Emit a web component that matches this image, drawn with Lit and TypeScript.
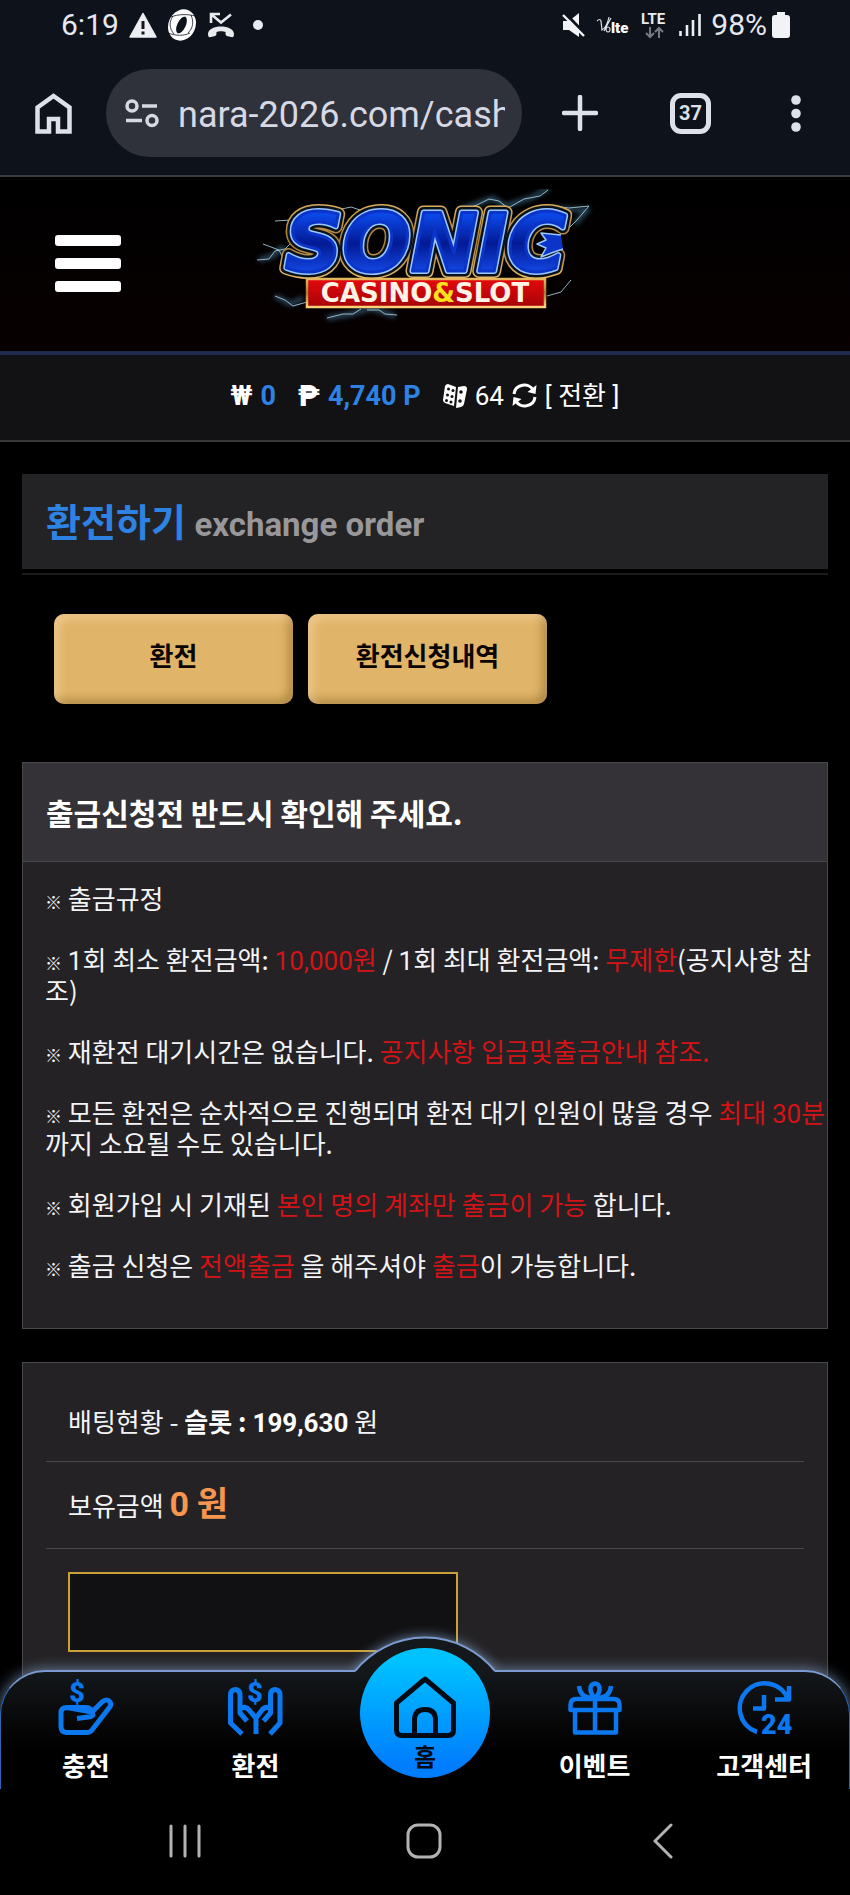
import { LitElement, html, css } from "lit";
import { customElement } from "lit/decorators.js";

@customElement("phone-status")
export class PhoneStatus extends LitElement {
  static styles = css`
    :host {
      display: flex;
      align-items: center;
      justify-content: space-between;
      height: 50px;
      padding: 0 60px 0 61px;
      font: 400 30px/50px Roboto, sans-serif;
      color: #e6e8f0;
    }
    .group { display: flex; align-items: center; }
    .left { gap: 10px; }
    .right { gap: 10px; }
    .dot { width: 10px; height: 10px; margin-left: 8px; border-radius: 50%; background: #e8eaf6; }
    .power { display: flex; align-items: center; gap: 5px; }
    svg { display: block; }
    .net { font: 700 15px Roboto, sans-serif; }
    .volte { font: 900 15px Roboto, sans-serif; }
  `;
  render() {
    return html`
      <div class="group left">
        <span>6:19</span>
        <svg width="28" height="26" viewBox="0 0 28 26">
          <path d="M14 1.500 27 25H1z" fill="#eceef2" stroke="#eceef2" stroke-width="1.500" stroke-linejoin="round"/>
          <path d="M14 9v8M14 19.500v3" stroke="#10151d" stroke-width="3"/>
        </svg>
        <svg width="30" height="32" viewBox="0 0 30 32">
          <ellipse cx="15" cy="16" rx="13.500" ry="16" transform="rotate(25 15 16)" fill="#fff"/>
          <ellipse cx="14.500" cy="16" rx="4.200" ry="9" transform="rotate(25 14.500 16)" fill="#0d121b"/>
          <path d="M4 8c7-3 17-3 24-1M1 24c8 3 16 3 22 0M6 7c-4 6-4 12 1 18M24 6c3 7 2 13-3 18" fill="none" stroke="#10151d" stroke-width=".8"/>
        </svg>
        <svg width="28" height="26" viewBox="0 0 28 26">
          <path d="M4 11V2h9M4.500 2.500 14 10.500 24 2.500" fill="none" stroke="#e8eaee" stroke-width="2.600"/>
          <path d="M1 22c0-10 26-10 26 0 0 3-1 3.500-3 3l-4-1c-1.500-.4-1.500-1.500-1.500-4-2-1-7-1-9 0 0 2.500 0 3.600-1.500 4l-4 1c-2 .5-3 0-3-3z" fill="#e8eaee"/>
        </svg>
        <span class="dot"></span>
      </div>
      <div class="group right">
        <svg width="24" height="24" viewBox="0 0 24 24">
          <path d="M1 8h6L17 0v24L7 17H1z" fill="#f1f3f6"/>
          <path d="M3 0 24 22" stroke="#0d121b" stroke-width="3"/>
          <path d="M1 2 22 23" stroke="#f1f3f6" stroke-width="2.400"/>
        </svg>
        <svg width="35" height="24" viewBox="0 0 35 24">
          <path d="M1 8q3-3 4 0l1 9Q11 14 13 4M8 18 15 5M12 14a2 2.500 0 1 0 .1 0" fill="none" stroke="#dfe1e6" stroke-width="1.200"/>
          <text class="volte" x="15" y="20" fill="#fff">lte</text>
        </svg>
        <svg width="28" height="28" viewBox="0 0 28 28">
          <text class="net" x="0" y="13" fill="#e8eaee">LTE</text>
          <path d="M9 16v10M5 22l4 4 4-4M18 27V17M14 21l4-4 4 4" fill="none" stroke="#777b80" stroke-width="2"/>
        </svg>
        <svg width="22" height="24" viewBox="0 0 22 24">
          <path d="M1.500 18v5M8 12v11M14 7v16M20.500 1v22" stroke="#eceef2" stroke-width="2.600"/>
        </svg>
        <div class="power">
          <span>98%</span>
          <svg width="18" height="26" viewBox="0 0 18 26"><path d="M5 0h8v3h2q3 0 3 3v17q0 3-3 3H3q-3 0-3-3V6q0-3 3-3h2z" fill="#f1f3f6"/></svg>
        </div>
      </div>
    `;
  }
}

@customElement("browser-bar")
export class BrowserBar extends LitElement {
  static styles = css`
    :host {
      display: flex;
      align-items: center;
      height: 88px;
      padding: 19px 49px 18px 35px;
      border-bottom: 2px solid #3a3b40;
    }
    button { display: block; padding: 0; border: 0; background: none; color: #dee1ea; cursor: pointer; }
    svg { display: block; }
    .address {
      display: flex;
      flex: 1;
      align-items: center;
      gap: 19px;
      min-width: 0;
      height: 88px;
      box-sizing: border-box;
      margin: 0 40px 0 34px;
      padding: 0 17px 0 19px;
      border-radius: 44px;
      background: #2f323b;
    }
    .url {
      flex: 1;
      min-width: 0;
      padding: 3px 0 0;
      border: 0;
      outline: 0;
      background: none;
      color: #d6d9e3;
      font: 400 36px/44px Roboto, sans-serif;
    }
    .actions { display: flex; align-items: center; }
    .tabs {
      width: 41px;
      height: 41px;
      margin: 0 80px 0 72px;
      box-sizing: border-box;
      border: 5px solid #dee1ea;
      border-radius: 11px;
      font: 700 20px/31px Roboto, sans-serif;
    }
  `;
  render() {
    return html`
      <button aria-label="Home">
        <svg width="37" height="41" viewBox="0 0 37 41"><path d="M2.500 14.500 18.500 3l16 11.500v24H23V26h-9v12.500H2.500z" fill="none" stroke="#dee1ea" stroke-width="4.500"/></svg>
      </button>
      <div class="address">
        <svg width="34" height="29" viewBox="0 0 34 29" fill="none" stroke="#d6d9e3" stroke-width="3.500">
          <circle cx="7" cy="7" r="5"/><path d="M17 7h15M1 21.500h16"/><circle cx="27" cy="21.500" r="5"/>
        </svg>
        <input class="url" type="text" aria-label="Address" .value=${"nara-2026.com/cash"} />
      </div>
      <div class="actions">
        <button aria-label="New tab">
          <svg width="36" height="36" viewBox="0 0 36 36"><path d="M18 2v32M2 18h32" stroke="#dee1ea" stroke-width="4.500" stroke-linecap="round"/></svg>
        </button>
        <button class="tabs" aria-label="Tabs">37</button>
        <button aria-label="Menu">
          <svg width="10" height="37" viewBox="0 0 10 37" fill="#dee1ea"><circle cx="5" cy="5" r="4.800"/><circle cx="5" cy="18.500" r="4.800"/><circle cx="5" cy="32" r="4.800"/></svg>
        </button>
      </div>
    `;
  }
}

@customElement("site-header")
export class SiteHeader extends LitElement {
  static styles = css`
    :host { display: block; flex: none; }
    .top {
      display: grid;
      grid-template-columns: 1fr auto 1fr;
      align-items: center;
      height: 174px;
      border-bottom: 4px solid #1f2a50;
      background: linear-gradient(#000, #080001);
    }
    .menu {
      display: flex;
      flex-direction: column;
      gap: 12px;
      width: 66px;
      margin: 0 0 2px 55px;
      padding: 0;
      border: 0;
      background: none;
    }
    .bar { height: 11px; border-radius: 3px; background: #fff; }
    svg { display: block; }
    .sonic { font: italic 700 80px "DejaVu Sans", sans-serif; }
    .tag { font: 700 26px "DejaVu Sans", sans-serif; }
    .balance {
      display: flex;
      align-items: center;
      justify-content: center;
      gap: 22px;
      height: 81px;
      padding-bottom: 4px;
      border-bottom: 2px solid #3a3a3c;
      background: #121214;
      color: #fff;
      font: 400 26px/32px Roboto, "Noto Sans CJK KR", sans-serif;
    }
    .item { display: flex; align-items: center; gap: 8px; }
    .item b { font-size: 27px; font-weight: 700; }
    .item .coin { font-size: 29px; font-weight: 900; }
    .item .blue { color: #2e82e3; }
    .swap { padding: 0; border: 0; background: none; color: inherit; font: inherit; }
  `;
  render() {
    return html`
      <div class="top">
        <button class="menu" aria-label="Menu"><span class="bar"></span><span class="bar"></span><span class="bar"></span></button>
        <svg width="360" height="150" viewBox="0 0 360 150" role="img" aria-label="SONIC CASINO&SLOT">
          <defs>
            <linearGradient id="blue" x1="0" y1="0" x2="0" y2="1"><stop offset="0.200" stop-color="#0b46e6"/><stop offset=".5" stop-color="#031a94"/><stop offset=".8" stop-color="#1246e0"/></linearGradient>
            <linearGradient id="gold" x1="0" y1="0" x2="0" y2="1"><stop offset="0" stop-color="#e6b75e"/><stop offset=".5" stop-color="#a77a35"/><stop offset="1" stop-color="#ffd27a"/></linearGradient>
            <linearGradient id="red" x1="0" y1="0" x2="0" y2="1"><stop offset="0" stop-color="#e4090c"/><stop offset="1" stop-color="#a60408"/></linearGradient>
            <filter id="glow" x="-20%" y="-50%" width="140%" height="200%"><feGaussianBlur stdDeviation="2.500"/></filter>
          </defs>
          <g fill="none" stroke="#4f8fb8" transform="translate(6 -5)">
            <g filter="url(#glow)" stroke-width="4" opacity=".6">
              <path d="M8 76 22 72l8-8 8 6M24 112l16 8 12-6M208 26l34-12 12 8 26-8 18-10M298 24l38 2-12 14M76 134l24-4 20-6 24 8"/>
            </g>
            <g stroke="#a9cfdf" stroke-width="1" opacity=".85">
              <path d="M6 76 18 75l6-8 10-2 6-6M12 60l16 6 6 12M24 112l10 4 8 6 14-4M76 134l16-4 10 0 8-5M116 126l12 0 6 4 12 1M86 26l14-3 12 4 12-1M208 27l18-6 12-6 10 2 9 7 16-9 16-3 8-6M300 22l18 2 20-2-12 14-10 10M40 36l-16 1M320 96l-10 12-14 4"/>
            </g>
          </g>
          <g class="sonic" stroke-linejoin="round">
            <text x="40" y="82" fill="#e7b35e" stroke="url(#gold)" stroke-width="14">SONIC</text>
            <text x="40" y="82" fill="#08121f" stroke="#08121f" stroke-width="11">SONIC</text>
            <text x="40" y="82" fill="#9cc8ff" stroke="#9cc8ff" stroke-width="6">SONIC</text>
            <text x="40" y="82" fill="url(#blue)" stroke="#0a35c8" stroke-width="3">SONIC</text>
          </g>
          <path d="m316 46-20-2 5 7-9 4 9 4-5 9 13-5 9-3" fill="#0a35c8" stroke="#9cc8ff" stroke-width="1.500" stroke-linejoin="round"/>
          <rect x="62" y="90" width="238" height="28" fill="url(#red)" stroke="url(#gold)" stroke-width="2.500"/>
          <text class="tag" x="180" y="113" text-anchor="middle" fill="#fff4e6">CASINO<tspan fill="#ffe11c">&amp;</tspan>SLOT</text>
        </svg>
      </div>
      <div class="balance">
        <span class="item"><b>₩</b><b class="blue">0</b></span>
        <span class="item"><b class="coin">₱</b><b class="blue">4,740 P</b></span>
        <span class="item">
          <svg width="24" height="24" viewBox="0 0 24 24">
            <path d="M5 0 13 3 11 22 2 19Q0 18 0 16L2 2Q3 0 5 0z" fill="#fff"/>
            <path d="m15 3 6-1q3 0 3 3l-3 15q-.5 2-3 3l-5 1z" fill="#fff"/>
            <g fill="#121214"><circle cx="5.500" cy="5" r="1.500"/><circle cx="10" cy="6.500" r="1.500"/><circle cx="4.500" cy="11" r="1.500"/><circle cx="9" cy="12.500" r="1.500"/><circle cx="3.500" cy="16.500" r="1.500"/><circle cx="8" cy="18" r="1.500"/><circle cx="18" cy="8" r="1.800"/><circle cx="17" cy="17" r="1.800"/></g>
          </svg>
          <span>64</span>
          <svg width="25" height="25" viewBox="0 0 25 25" fill="none" stroke="#fff" stroke-width="3">
            <path d="M2 11C3 1 17-1 21 7M23 14C22 24 8 26 4 18"/>
            <path d="m24.500 2-1 9-8-2zM.5 23l1-9 8 2z" fill="#fff" stroke="none"/>
          </svg>
          <button class="swap">[ 전환 ]</button>
        </span>
      </div>
    `;
  }
}

@customElement("exchange-page")
export class ExchangePage extends LitElement {
  static styles = css`
    :host {
      display: flex;
      flex: 1 0 auto;
      flex-direction: column;
      padding: 32px 22px 0;
      color: #f4f4f6;
      font: 400 26px/31px "Noto Sans CJK KR", sans-serif;
    }
    .title {
      margin: 0;
      padding: 18px 24px 21px;
      background: #232225;
      color: #2e82e3;
      font-size: 38px;
      line-height: 56px;
      font-weight: 700;
    }
    .title small { color: #98979a; font: 700 33px/0 Roboto, sans-serif; }
    .rule { height: 2px; margin-top: 4px; background: #1c1c1e; }
    .tabs { display: flex; gap: 15px; margin: 39px 32px 58px; }
    .tab {
      width: 239px;
      height: 90px;
      padding: 0 0 8px;
      border: 0;
      border-radius: 10px;
      background: #e1b569;
      box-shadow: inset 5px 5px 8px rgba(255, 225, 190, 0.4), inset -5px -5px 8px rgba(110, 80, 20, 0.4);
      color: #0a0502;
      font: 700 26px/36px "Noto Sans CJK KR", sans-serif;
    }
    .panel { border: 1px solid #48474b; background: #242225; }
    .panel h2 {
      margin: 0;
      padding: 0 23px;
      border-bottom: 1px solid #48474b;
      background: #343236;
      color: #fff;
      font-size: 30px;
      line-height: 98px;
      font-weight: 700;
    }
    .rules { margin: 0; padding: 20px 0 48px 22px; }
    .rules p { margin: 0 0 30px; word-break: break-all; }
    .rules p:last-child { margin: 0; }
    .mark { font-size: 17px; line-height: 0; font-weight: 500; }
    .num { font-family: Roboto, sans-serif; line-height: 0; }
    .red { color: #d31316; }
    .form { flex: 1; margin-top: 33px; padding: 17px 23px 0; border-bottom: 0; }
    .row { padding: 0 22px; border-bottom: 1px solid #48474b; }
    .bets { line-height: 81px; }
    .bets b { color: #fff; }
    .held { line-height: 86px; }
    .held strong { color: #f5954f; font-size: 34px; line-height: 0; }
    .amount {
      display: block;
      width: 390px;
      max-width: 90%;
      height: 80px;
      box-sizing: border-box;
      margin: 23px 22px;
      padding: 0 16px;
      border: 2px solid #c9a136;
      border-radius: 0;
      outline: 0;
      background: #111113;
      color: #fff;
      font: inherit;
    }
  `;
  render() {
    const mark = html`<span class="mark">※</span>`;
    return html`
      <h1 class="title">환전하기 <small>exchange order</small></h1>
      <div class="rule"></div>
      <div class="tabs"><button class="tab">환전</button><button class="tab">환전신청내역</button></div>
      <section class="panel">
        <h2>출금신청전 반드시 확인해 주세요.</h2>
        <div class="rules">
          <p>${mark} 출금규정</p>
          <p>${mark} <span class="num">1</span>회 최소 환전금액: <span class="red"><span class="num">10,000</span>원</span> / <span class="num">1</span>회 최대 환전금액: <span class="red">무제한</span>(공지사항 참조)</p>
          <p>${mark} 재환전 대기시간은 없습니다. <span class="red">공지사항 입금및출금안내 참조.</span></p>
          <p>${mark} 모든 환전은 순차적으로 진행되며 환전 대기 인원이 많을 경우 <span class="red">최대 <span class="num">30</span>분</span>까지 소요될 수도 있습니다.</p>
          <p>${mark} 회원가입 시 기재된 <span class="red">본인 명의 계좌만 출금이 가능</span> 합니다.</p>
          <p>${mark} 출금 신청은 <span class="red">전액출금</span> 을 해주셔야 <span class="red">출금</span>이 가능합니다.</p>
        </div>
      </section>
      <section class="panel form">
        <div class="row bets">배팅현황 - <b>슬롯 : <span class="num">199,630</span></b> 원</div>
        <div class="row held"><label for="amount">보유금액</label> <strong><span class="num">0</span> 원</strong></div>
        <input class="amount" id="amount" type="text" inputmode="numeric" />
      </section>
    `;
  }
}

@customElement("bottom-nav")
export class BottomNav extends LitElement {
  static styles = css`
    :host { position: absolute; left: 0; right: 0; bottom: 0; display: block; }
    .bar {
      display: grid;
      grid-template-columns: repeat(5, 1fr);
      height: 119px;
      box-sizing: border-box;
      border: 1px solid #2c66b4;
      border-top: 2px solid #7b9bd0;
      border-bottom: 0;
      border-radius: 45px 45px 0 0;
      background: linear-gradient(#14181b, #060607 55px, #000 80px);
      box-shadow: 0 0 14px 1px rgba(150, 185, 230, 0.6);
    }
    .hump {
      position: absolute;
      left: 50%;
      top: -31px;
      margin-left: -70px;
      overflow: visible;
      filter: drop-shadow(0 0 6px rgba(150, 185, 230, 0.7));
      clip-path: inset(-24px -24px 0);
    }
    a {
      display: flex;
      flex-direction: column;
      align-items: center;
      gap: 11px;
      padding-top: 9px;
      color: #fff;
      text-decoration: none;
      font: 700 26px/38px "Noto Sans CJK KR", sans-serif;
    }
    a svg { display: block; overflow: visible; }
    .icon { fill: none; stroke: #0b78f0; stroke-width: 5; stroke-linejoin: round; }
    .glyph { fill: #0b78f0; stroke: none; font: 900 27px Roboto, sans-serif; }
    .home {
      position: absolute;
      left: 50%;
      top: -22px;
      gap: 0;
      width: 130px;
      height: 130px;
      box-sizing: border-box;
      margin-left: -65px;
      padding-top: 28px;
      border-radius: 50%;
      background: linear-gradient(#00c2ff 10%, #007dff 90%);
      color: #020a14;
      font-size: 24px;
      line-height: 36px;
    }
  `;
  render() {
    return html`
      <nav>
        <div class="bar">
          <a href="#charge">
            <svg class="icon" width="54" height="54" viewBox="0 0 54 54">
              <text class="glyph" x="18" y="21" text-anchor="middle">$</text>
              <path d="M8 26.500H27q6 0 7 7.500-1 2-5 2l-11 1.500M33 31l10-10q5-4 8 0 2 3-1 6L33 49q-2 2.500-5 2.500H8q-6 0-6-6V32q0-5.500 6-5.500z"/>
            </svg>충전
          </a>
          <a href="#exchange">
            <svg class="icon" width="54" height="54" viewBox="0 0 54 54">
              <text class="glyph" x="27" y="21" text-anchor="middle">$</text>
              <path d="M14 53 2.500 42V14q0-5 5-5.500 4.500.5 4.500 5.500v18l7 8M13 27q5-2 8 2l7 8v16M42 53l10-11V14q0-5-5-5.500-4.500.5-4.500 5.500v18l-7 8M42 27q-5-2-8 2l-6 8"/>
            </svg>환전
          </a>
          <span></span>
          <a href="#event">
            <svg class="icon" width="54" height="54" viewBox="0 0 54 54">
              <path d="M2.500 29V24q0-6 6-6h37q6 0 6 6v5zM7 30v21.500h41V30M27 18v34M27 17c-6-5-6-14 0-14.500 6 .5 6 9.500 0 14.500zM23 17q-11-1-12-12M31 17q11-1 12-12" stroke-width="4.500"/>
            </svg>이벤트
          </a>
          <a href="#support">
            <svg class="icon" width="54" height="54" viewBox="0 0 54 54">
              <path d="M20 51A25 25 0 1 1 51 18M52 5v13.500H38M27 14v13.500H16" stroke-width="4.500"/>
              <text class="glyph" x="24" y="53">24</text>
            </svg>고객센터
          </a>
        </div>
        <svg class="hump" width="140" height="33" viewBox="0 0 140 33">
          <path d="M0 33V32A90 90 0 0 1 140 32V33z" fill="#15181b"/>
          <path d="M0 32A90 90 0 0 1 140 32" fill="none" stroke="#7b9bd0" stroke-width="2"/>
        </svg>
        <a class="home" href="#home">
          <svg width="62" height="62" viewBox="0 0 62 62" fill="none" stroke="#020a14" stroke-width="5" stroke-linejoin="round">
            <path d="M2.500 27 31 3l28.500 24v27q0 5.500-5.500 5.500H8q-5.500 0-5.500-5.500zM20.500 59V44q0-10.500 10.500-10.500T41.500 44v15"/>
          </svg>홈
        </a>
      </nav>
    `;
  }
}

@customElement("app-root")
export class AppRoot extends LitElement {
  static styles = css`
    :host { display: flex; flex-direction: column; height: 100vh; background: #000; }
    .chrome { flex: none; background: #0d121b; }
    .site { position: relative; display: flex; flex: 1; flex-direction: column; min-height: 0; overflow: hidden; }
    .system { display: grid; flex: none; grid-template-columns: repeat(3, 1fr); padding: 0 68px 0 66px; background: #000; }
    .system button { display: flex; align-items: center; justify-content: center; height: 106px; padding: 0 0 2px; border: 0; background: none; }
    .system svg { fill: none; stroke: #b3b2b5; stroke-width: 3; stroke-linecap: round; }
  `;
  render() {
    return html`
      <div class="chrome"><phone-status></phone-status><browser-bar></browser-bar></div>
      <main class="site">
        <site-header></site-header>
        <exchange-page></exchange-page>
        <bottom-nav></bottom-nav>
      </main>
      <div class="system">
        <button aria-label="Recent apps"><svg width="34" height="34" viewBox="0 0 34 34"><path d="M3 2v30M17 2v30M31 2v30"/></svg></button>
        <button aria-label="Home screen"><svg width="36" height="36" viewBox="0 0 36 36"><rect x="2" y="2" width="32" height="32" rx="10"/></svg></button>
        <button aria-label="Back"><svg width="20" height="36" viewBox="0 0 20 36"><path d="M18 2 2 18l16 16"/></svg></button>
      </div>
    `;
  }
}
